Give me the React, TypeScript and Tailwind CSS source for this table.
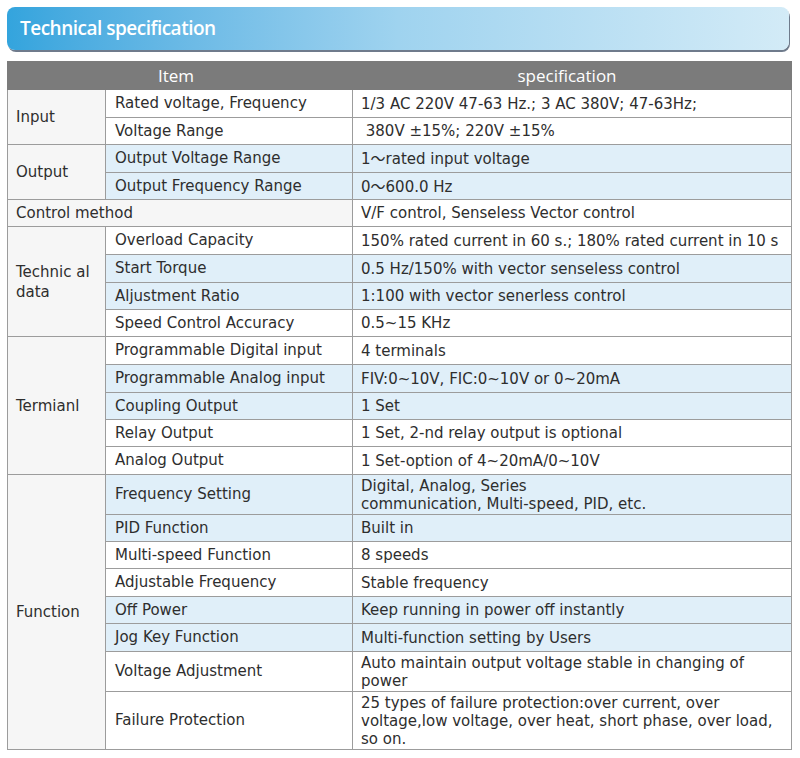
import React from "react";

type Row = { label: string; value: React.ReactNode; blue?: boolean; h: string };
type Group = { name: React.ReactNode; rows: Row[] };

const T = () => <span style={{ fontFamily: '"Noto Sans CJK SC", sans-serif' }}>～</span>;

const groups: Group[] = [
  {
    name: "Input",
    rows: [
      { label: "Rated voltage, Frequency", value: "1/3 AC 220V 47-63 Hz.; 3 AC 380V; 47-63Hz;", h: "h-[28px]" },
      { label: "Voltage Range", value: "\u00a0380V ±15%; 220V ±15%", h: "h-[27px]" },
    ],
  },
  {
    name: "Output",
    rows: [
      { label: "Output Voltage Range", value: <>1<T />rated input voltage</>, blue: true, h: "h-[28px]" },
      { label: "Output Frequency Range", value: <>0<T />600.0 Hz</>, blue: true, h: "h-[27px]" },
    ],
  },
];

const groups2: Group[] = [
  {
    name: (
      <>
        Technic al
        <br />
        data
      </>
    ),
    rows: [
      { label: "Overload Capacity", value: "150% rated current in 60 s.; 180% rated current in 10 s", h: "h-[28px]" },
      { label: "Start Torque", value: "0.5 Hz/150% with vector senseless control", blue: true, h: "h-[28px]" },
      { label: "Aljustment Ratio", value: "1:100 with vector senerless control", blue: true, h: "h-[27px]" },
      { label: "Speed Control Accuracy", value: "0.5~15 KHz", h: "h-[27px]" },
    ],
  },
  {
    name: "Termianl",
    rows: [
      { label: "Programmable Digital input", value: "4 terminals", h: "h-[28px]" },
      { label: "Programmable Analog input", value: "FIV:0~10V, FIC:0~10V or 0~20mA", blue: true, h: "h-[28px]" },
      { label: "Coupling Output", value: "1 Set", blue: true, h: "h-[27px]" },
      { label: "Relay Output", value: "1 Set, 2-nd relay output is optional", h: "h-[27px]" },
      { label: "Analog Output", value: "1 Set-option of 4~20mA/0~10V", h: "h-[28px]" },
    ],
  },
  {
    name: "Function",
    rows: [
      {
        label: "Frequency Setting",
        value: (
          <>
            Digital, Analog, Series
            <br />
            communication, Multi-speed, PID, etc.
          </>
        ),
        blue: true,
        h: "h-[40px]",
      },
      { label: "PID Function", value: "Built in", blue: true, h: "h-[27px]" },
      { label: "Multi-speed Function", value: "8 speeds", h: "h-[27px]" },
      { label: "Adjustable Frequency", value: "Stable frequency", h: "h-[28px]" },
      { label: "Off Power", value: "Keep running in power off instantly", blue: true, h: "h-[27px]" },
      { label: "Jog Key Function", value: "Multi-function setting by Users", blue: true, h: "h-[28px]" },
      {
        label: "Voltage Adjustment",
        value: (
          <>
            Auto maintain output voltage stable in changing of
            <br />
            power
          </>
        ),
        h: "h-[40px]",
      },
      {
        label: "Failure Protection",
        value: (
          <>
            25 types of failure protection:over current, over
            <br />
            voltage,low voltage, over heat, short phase, over load,
            <br />
            so on.
          </>
        ),
        h: "h-[58px]",
      },
    ],
  },
];

const cell = "border border-[#9c9c9c] align-middle";
const font = { fontFamily: '"DejaVu Sans", Verdana, sans-serif' };

function GroupRows({ g }: { g: Group }) {
  return (
    <>
      {g.rows.map((r, i) => (
        <tr key={i} className={r.h}>
          {i === 0 && (
            <td rowSpan={g.rows.length} className={`${cell} bg-[#f6f6f6] pl-[8px] pr-1 leading-[20px]`}>
              {g.name}
            </td>
          )}
          <td className={`${cell} pl-[9px] whitespace-nowrap ${r.blue ? "bg-[#e0eff9]" : "bg-white"}`}>{r.label}</td>
          <td className={`${cell} pl-[8px] leading-[18px] whitespace-nowrap ${r.blue ? "bg-[#e0eff9]" : "bg-white"}`}>{r.value}</td>
        </tr>
      ))}
    </>
  );
}

export default function App() {
  return (
    <div className="w-[800px] h-[758px] bg-white overflow-hidden">
      <div className="pt-[7px] pl-[7px] pr-[11px]">
        <div className="h-[43px] rounded-[8px] bg-gradient-to-r from-[#33a4dd] via-[#9fd3ef] via-50% to-[#d3ebf7] shadow-[1px_2px_0_#6f7b8c] flex items-center pl-[13px]">
          <span
            className="text-white text-[19px] font-semibold tracking-[-0.5px]"
            style={{ fontFamily: '"Open Sans", sans-serif' }}
          >
            Technical specification
          </span>
        </div>
      </div>
      <div className="pt-[11px] pl-[7px]">
        <table className="border-collapse w-[785px] text-[15px] text-[#2e2e2e]" style={font}>
          <colgroup>
            <col className="w-[98px]" />
            <col className="w-[247px]" />
            <col />
          </colgroup>
          <tbody>
            <tr className="h-[28px] bg-[#7b7b7b] text-white text-[17px]" style={{ fontFamily: '"Open Sans", sans-serif' }}>
              <th colSpan={2} className="border border-[#7b7b7b] font-normal text-center pr-[8px]">
                Item
              </th>
              <th className="border border-[#7b7b7b] font-normal text-center pr-[10px]">specification</th>
            </tr>
            {groups.map((g, i) => (
              <GroupRows key={i} g={g} />
            ))}
            <tr className="h-[27px]">
              <td colSpan={2} className={`${cell} bg-[#f6f6f6] pl-[8px]`}>
                Control method
              </td>
              <td className={`${cell} pl-[8px] bg-white`}>V/F control, Senseless Vector control</td>
            </tr>
            {groups2.map((g, i) => (
              <GroupRows key={i} g={g} />
            ))}
          </tbody>
        </table>
      </div>
    </div>
  );
}
